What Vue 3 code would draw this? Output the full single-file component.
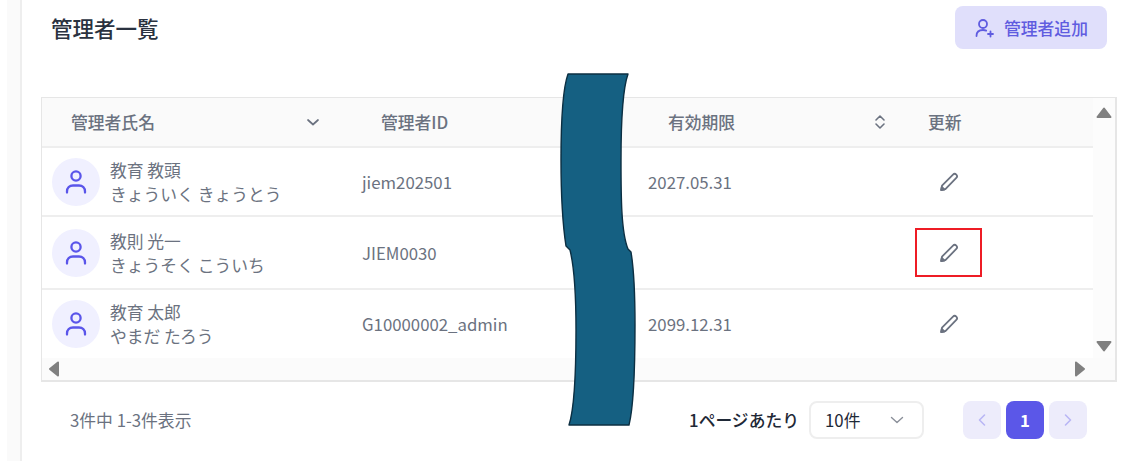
<script setup>
const rows = [
  { name: '教育 教頭', kana: 'きょういく きょうとう', id: 'jiem202501', date: '2027.05.31', h: 69 },
  { name: '教則 光一', kana: 'きょうそく こういち', id: 'JIEM0030', date: '', h: 73, marked: true },
  { name: '教育 太郎', kana: 'やまだ たろう', id: 'G10000002_admin', date: '2099.12.31', h: 68 }
]
</script>

<template>
  <div class="page">
    <div class="rail"></div>
    <main class="main">
      <header class="head">
        <h1 class="title">管理者一覧</h1>
        <button class="add" type="button">
          <svg width="20" height="20" viewBox="0 0 20 20" fill="none" stroke="currentColor" stroke-width="1.800" stroke-linecap="round">
            <circle cx="8" cy="6" r="4" />
            <path d="M1.500 18c0-4 2.600-6 6.500-6 1.200 0 2.300.2 3.200.6" />
            <path d="M15.500 13.500v5M13 16h5" />
          </svg>
          <span>管理者追加</span>
        </button>
      </header>

      <section class="table">
        <div class="content">
          <div class="grid hrow">
            <div class="th th-name">
              <span>管理者氏名</span>
              <svg class="sort" width="14" height="14" viewBox="0 0 14 14" fill="none" stroke="#6b7280" stroke-width="1.700" stroke-linecap="round" stroke-linejoin="round"><path d="M2 5l5 4.500L12 5" /></svg>
            </div>
            <div class="th th-id">管理者ID</div>
            <div class="th th-date">
              <span>有効期限</span>
              <svg class="sort2" width="14" height="16" viewBox="0 0 14 16" fill="none" stroke="#6b7280" stroke-width="1.600" stroke-linecap="round" stroke-linejoin="round"><path d="M3 6l4-4 4 4M3 10l4 4 4-4" /></svg>
            </div>
            <div class="th th-up">更新</div>
          </div>
          <div v-for="r in rows" :key="r.id" class="grid row" :style="{ height: r.h + 'px' }">
            <div class="td td-name">
              <span class="avatar">
                <svg width="24" height="28" viewBox="0 0 24 28" fill="none" stroke="#5a55ea" stroke-width="2.300" stroke-linecap="round">
                  <circle cx="12" cy="8" r="4.600" />
                  <path d="M3 24.500v-1c0-3.500 2.500-6 6-6h6c3.500 0 6 2.500 6 6v1" />
                </svg>
              </span>
              <span class="names">
                <span>{{ r.name }}</span>
                <span>{{ r.kana }}</span>
              </span>
            </div>
            <div class="td td-id">{{ r.id }}</div>
            <div class="td td-date">{{ r.date }}</div>
            <div class="td td-up">
              <span class="edit" :class="{ marked: r.marked }">
                <svg width="20" height="20" viewBox="0 0 20 20" fill="none" stroke="#6b7280" stroke-width="1.800" stroke-linejoin="round" stroke-linecap="round">
                  <path d="M2.200 18l.8-4.400L14 2.600a2.100 2.100 0 0 1 3.300 3.300L6.400 17.200z" />
                  <path d="M2.200 18l.6-3 2.500 2.500z" fill="#6b7280" />
                </svg>
              </span>
            </div>
          </div>
        </div>
        <div class="vbar">
          <svg width="16" height="12" viewBox="0 0 16 12"><path d="M8 1.500L14.500 10H1.500z" fill="#808080" stroke="#808080" stroke-width="2" stroke-linejoin="round" /></svg>
          <svg width="16" height="12" viewBox="0 0 16 12"><path d="M8 10.500L14.500 2H1.500z" fill="#808080" stroke="#808080" stroke-width="2" stroke-linejoin="round" /></svg>
        </div>
        <div class="hbar">
          <svg width="12" height="16" viewBox="0 0 12 16"><path d="M2 8L10 1.500v13z" fill="#808080" stroke="#808080" stroke-width="2" stroke-linejoin="round" /></svg>
          <svg width="12" height="16" viewBox="0 0 12 16"><path d="M10 8L2 1.500v13z" fill="#808080" stroke="#808080" stroke-width="2" stroke-linejoin="round" /></svg>
        </div>
      </section>

      <footer class="foot">
        <span class="count">3件中 1-3件表示</span>
        <div class="pager">
          <span class="per">1ページあたり</span>
          <div class="select">
            <span>10件</span>
            <svg width="14" height="14" viewBox="0 0 14 14" fill="none" stroke="#8a8f99" stroke-width="1.400" stroke-linecap="round" stroke-linejoin="round"><path d="M1.500 4.500L7 9.500l5.500-5" /></svg>
          </div>
          <div class="pages">
            <span class="pg">
              <svg width="10" height="14" viewBox="0 0 10 14" fill="none" stroke="#b9b6f5" stroke-width="1.600" stroke-linecap="round" stroke-linejoin="round"><path d="M7.500 2L2.500 7l5 5" /></svg>
            </span>
            <span class="pg active">1</span>
            <span class="pg">
              <svg width="10" height="14" viewBox="0 0 10 14" fill="none" stroke="#b9b6f5" stroke-width="1.600" stroke-linecap="round" stroke-linejoin="round"><path d="M2.500 2l5 5-5 5" /></svg>
            </span>
          </div>
        </div>
      </footer>
    </main>

    <svg class="blot" width="1148" height="468" viewBox="0 0 1148 468">
      <path d="M568 74H628C623 88 621 125 621 160C621 195 621 232 628 249L631 252C634 270 635 290 635 325C635 370 634 405 629 425H569C574 410 576 370 576 330C576 300 575 270 570 250L566 246C562 220 561 190 561 160C561 125 563 88 568 74Z" fill="#156082" stroke="#0c2f42" stroke-width="1.400" stroke-linejoin="round" />
    </svg>
  </div>
</template>

<style>
html, body { margin: 0; background: #fff; }
</style>

<style scoped>
.page {
  position: relative;
  display: flex;
  align-items: flex-start;
  width: 1148px;
  height: 468px;
  overflow: hidden;
  background: #fff;
  font-family: "Noto Sans CJK JP", "Noto Sans", sans-serif;
  color: #6b7280;
  font-size: 16.800px;
}
.rail {
  flex: none;
  width: 13px;
  height: 461px;
  margin-left: 7px;
  background: #fafafa;
  border-right: 2px solid #eeeeee;
}
.main {
  flex: none;
  width: 1075px;
  margin-left: 19px;
}
.head {
  display: flex;
  justify-content: space-between;
  align-items: flex-start;
  height: 97px;
  padding: 6px 9px 0 10px;
  box-sizing: border-box;
}
.title {
  margin: 7px 0 0;
  font-size: 21.500px;
  font-weight: 500;
  line-height: 30px;
  color: #2a3240;
}
.add {
  display: flex;
  align-items: center;
  gap: 9px;
  width: 152px;
  height: 43px;
  padding: 0 0 0 20px;
  box-sizing: border-box;
  border: 0;
  border-radius: 8px;
  background: #e0dffb;
  color: #5f5ce0;
  font: inherit;
  font-weight: 500;
}
.table {
  display: grid;
  grid-template-columns: 1051px 22px;
  grid-template-rows: 260px 22px;
  border: 1px solid #e6e6e6;
  border-width: 1px 2px 2px 1px;
  box-sizing: content-box;
  width: 1073px;
}
.content { grid-column: 1; grid-row: 1; }
.grid {
  display: grid;
  grid-template-columns: 299px 288px 280px 184px;
  border-bottom: 2px solid #eeeeee;
  box-sizing: border-box;
}
.hrow {
  height: 50px;
  background: #fafafa;
  align-items: center;
  font-weight: 500;
}
.row { align-items: center; background: #fff; }
.row:last-child { border-bottom: 0; }
.th { display: flex; align-items: center; position: relative; }
.th-name { padding-left: 29px; }
.th-id { padding-left: 40px; }
.th-date { padding-left: 39px; }
.th-up { padding-left: 19px; }
.sort { position: absolute; left: 264px; top: 50%; margin-top: -7px; }
.sort2 { position: absolute; left: 244px; top: 50%; margin-top: -8px; }
.td-name { display: flex; align-items: center; gap: 10px; padding-left: 10px; }
.td-id { padding-left: 21px; }
.td-date { padding-left: 19px; }
.td-up { padding-left: 6px; }
.avatar {
  flex: none;
  display: flex;
  align-items: center;
  justify-content: center;
  width: 48px;
  height: 48px;
  border-radius: 50%;
  background: #f0f0ff;
}
.names { display: flex; flex-direction: column; line-height: 24px; }
.edit {
  display: flex;
  align-items: center;
  justify-content: center;
  width: 67px;
  height: 49px;
  box-sizing: border-box;
}
.edit.marked { border: 2px solid #ee1c25; }
.vbar {
  grid-column: 2;
  grid-row: 1;
  display: flex;
  flex-direction: column;
  justify-content: space-between;
  align-items: center;
  padding: 9px 0 6px;
  background: #fcfcfc;
}
.hbar {
  grid-column: 1 / 3;
  grid-row: 2;
  display: flex;
  justify-content: space-between;
  align-items: center;
  padding: 0 29px 0 6px;
  background: #fbfbfb;
}
.foot {
  display: flex;
  justify-content: space-between;
  align-items: center;
  height: 38px;
  margin-top: 19px;
  padding: 0 29px 0 29px;
}
.pager { display: flex; align-items: center; }
.per { color: #1f2937; margin-right: 10px; font-weight: 500; }
.select {
  display: flex;
  align-items: center;
  justify-content: space-between;
  width: 115px;
  height: 38px;
  padding: 0 18px 0 14px;
  box-sizing: border-box;
  border: 2px solid #eeeeee;
  border-radius: 8px;
  color: #1f2937;
}
.pages { display: flex; gap: 5px; margin-left: 39px; }
.pg {
  display: flex;
  align-items: center;
  justify-content: center;
  width: 38px;
  height: 38px;
  border-radius: 8px;
  background: #edecfb;
}
.pg.active { background: #5b57e8; color: #fff; font-weight: 700; }
.blot { position: absolute; left: 0; top: 0; pointer-events: none; }
</style>
